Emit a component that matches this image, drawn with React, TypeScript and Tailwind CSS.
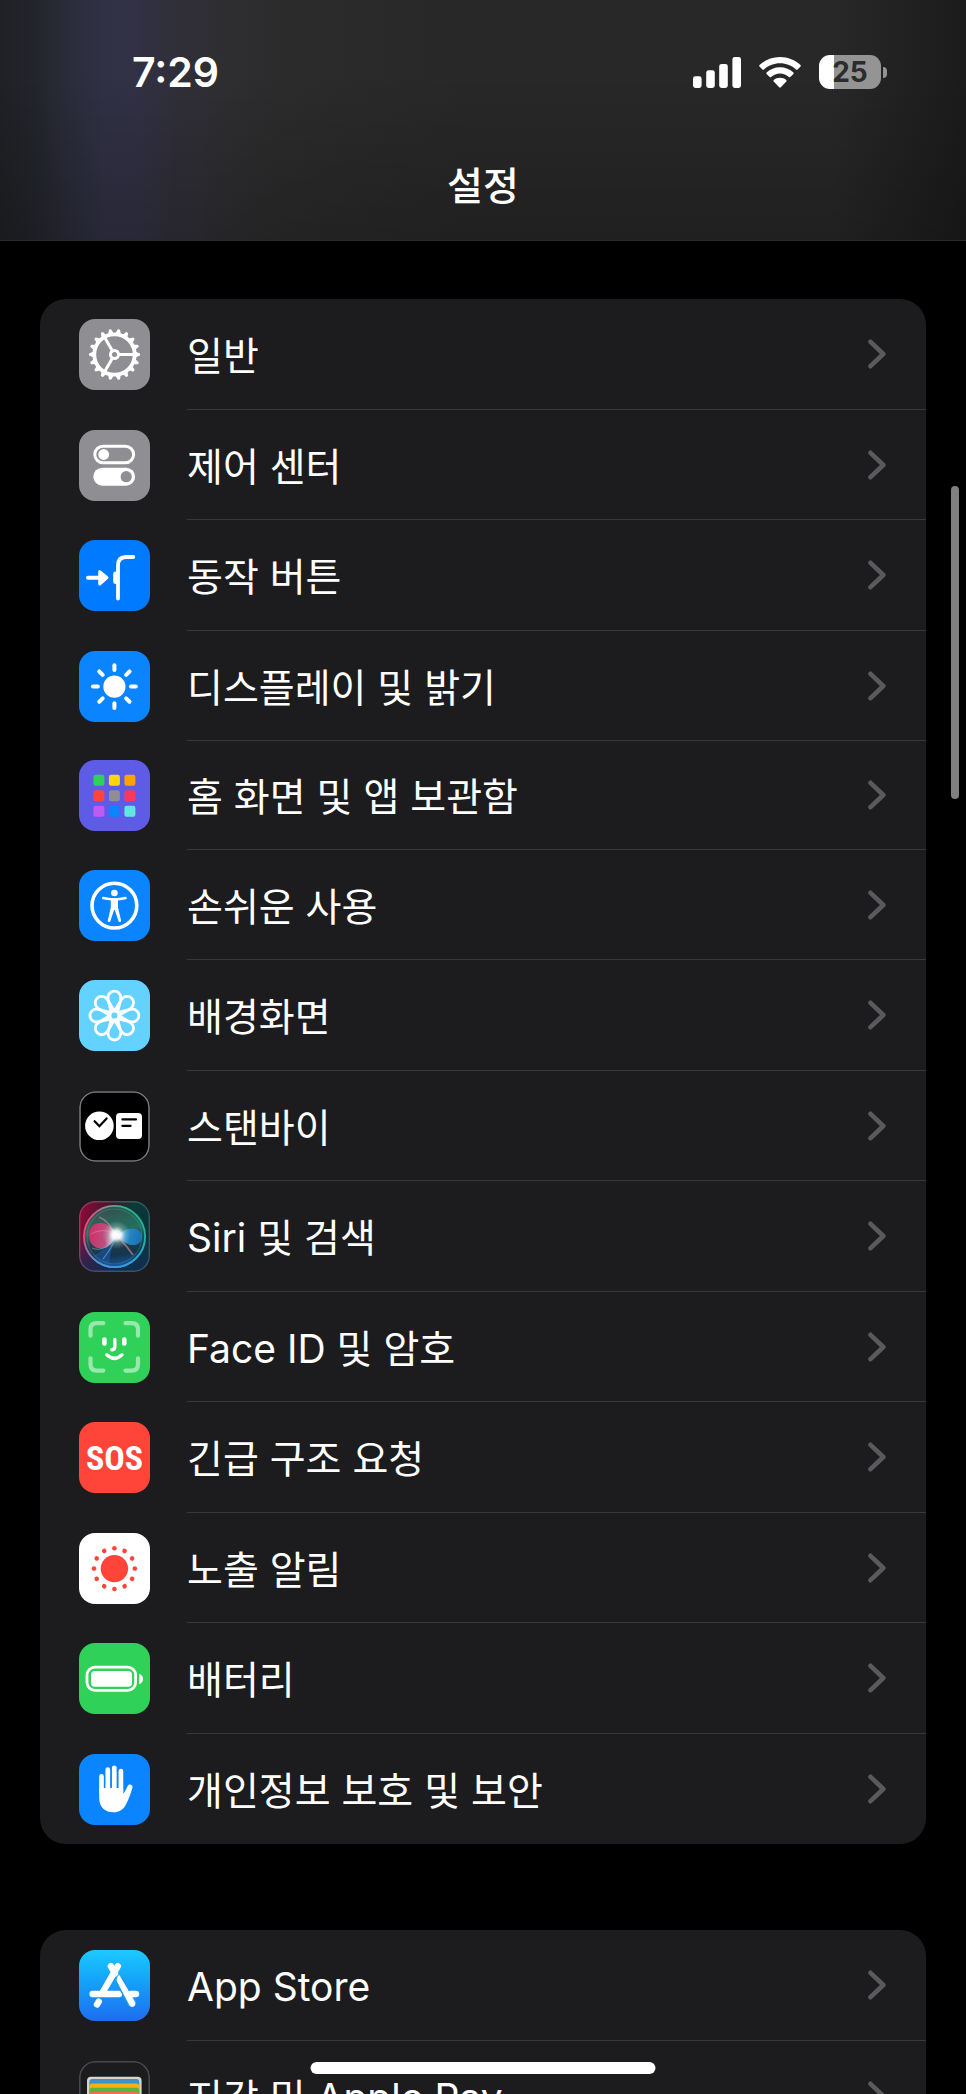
import type { ReactNode } from "react";

const FONT = "font-['Inter','Noto_Sans_CJK_KR',sans-serif]";

type Item = {
  label: string;
  tile: string;
  icon: ReactNode;
  compact?: boolean;
};

function Glyph({ children }: { children: ReactNode }) {
  return (
    <svg viewBox="0 0 71 71" className="block size-full" fill="none" aria-hidden="true">
      {children}
    </svg>
  );
}

function steps(count: number) {
  return Array.from({ length: count }, (_, i) => (360 / count) * i);
}

function GearIcon() {
  return (
    <Glyph>
      <g transform="translate(35.5 35.5)" stroke="#fff" strokeLinecap="round">
        <circle r="20.2" strokeWidth="3.8" />
        <circle r="4" strokeWidth="3" />
        {steps(18).map((a) => (
          <path key={a} d="M21.5 -1.6L24.6 -0.5V0.5L21.5 1.6Z" fill="#fff" strokeWidth="1.8" strokeLinejoin="round" transform={`rotate(${a})`} />
        ))}
        {steps(3).map((a) => (
          <path key={a} d="M5.5 0H19" strokeWidth="3" transform={`rotate(${a})`} />
        ))}
      </g>
    </Glyph>
  );
}

function TogglesIcon() {
  return (
    <Glyph>
      <rect x="15.8" y="16.2" width="38.8" height="16.6" rx="8.3" stroke="#fff" strokeWidth="3" />
      <circle cx="24.7" cy="24.5" r="5.4" fill="#fff" />
      <rect x="14.3" y="37.7" width="41.8" height="18" rx="9" fill="#fff" />
      <circle cx="47.2" cy="46.7" r="5.6" fill="#8e8e93" />
    </Glyph>
  );
}

function ActionIcon() {
  return (
    <Glyph>
      <path d="M9 37.7H22" stroke="#fff" strokeWidth="4" strokeLinecap="round" />
      <path d="M20.7 31.6L28 37.7L20.7 44Z" fill="#fff" stroke="#fff" strokeWidth="3" strokeLinejoin="round" />
      <path d="M54.3 17H47C41.5 17 39 20.5 39 25.5V58.5" stroke="#fff" strokeWidth="3.8" strokeLinecap="round" />
      <rect x="34.2" y="31.5" width="6" height="12.6" rx="2.4" fill="#fff" />
    </Glyph>
  );
}

function SunIcon() {
  return (
    <Glyph>
      <g transform="translate(35.4 35.6)">
        <circle r="11.1" fill="#fff" />
        {steps(8).map((a) => (
          <path key={a} d="M0 -16.6V-21.4" stroke="#fff" strokeWidth="4" strokeLinecap="round" transform={`rotate(${a})`} />
        ))}
      </g>
    </Glyph>
  );
}

const APP_COLORS = ["#30d158", "#ffd60a", "#ff9f0a", "#ff453a", "#8e8e93", "#ff375f", "#bf5af2", "#0a84ff", "#63e6e2"];

function HomeGridIcon() {
  return (
    <Glyph>
      {APP_COLORS.map((color, i) => (
        <rect key={color} x={14.4 + (i % 3) * 15.5} y={14.7 + Math.floor(i / 3) * 15.5} width="11" height="11" rx="2.2" fill={color} />
      ))}
    </Glyph>
  );
}

function AccessibilityIcon() {
  return (
    <Glyph>
      <circle cx="35.4" cy="35.6" r="22.4" stroke="#fff" strokeWidth="3.6" />
      <circle cx="35.4" cy="23" r="3.3" fill="#fff" />
      <path d="M24.2 28C28 29 31 29.4 35.4 29.4S42.8 29 46.6 28" stroke="#fff" strokeWidth="2.4" strokeLinecap="round" />
      <path d="M31.8 28.6H39V37.5L42 50.2A1.2 1.2 0 0 1 39.4 51L35.8 40H35L31.4 51A1.2 1.2 0 0 1 28.8 50.2L31.8 37.5Z" fill="#fff" />
    </Glyph>
  );
}

function FlowerIcon() {
  return (
    <Glyph>
      <g transform="translate(35.4 35.6)" stroke="#fff" strokeWidth="2.8">
        {steps(8).map((a) => (
          <path key={a} d="M-3.4 -3.4C-3.6 -8 -6.4 -13 -6.4 -18A6.4 6.4 0 0 1 6.4 -18C6.4 -13 3.6 -8 3.4 -3.4" transform={`rotate(${a})`} />
        ))}
        <circle r="4.4" />
      </g>
    </Glyph>
  );
}

function StandByIcon() {
  return (
    <Glyph>
      <rect x="1" y="1" width="69" height="69" rx="15.5" stroke="#77777a" strokeWidth="1.6" />
      <circle cx="20.4" cy="34.8" r="14.3" fill="#fff" />
      <path d="M15.6 30.2L20.4 35.2L27.6 27.4" stroke="#000" strokeWidth="2.2" strokeLinecap="round" />
      <rect x="37" y="22" width="26" height="26" rx="4" fill="#fff" />
      <path d="M43.4 28.4H57M43.4 34.8H51.6" stroke="#000" strokeWidth="2.2" strokeLinecap="round" />
    </Glyph>
  );
}

function SiriIcon() {
  return (
    <Glyph>
      <defs>
        <linearGradient id="siriBase" x1="0" y1="0.3" x2="1" y2="0.5">
          <stop offset="0" stopColor="#8a0a35" />
          <stop offset="0.4" stopColor="#3a1a30" />
          <stop offset="0.7" stopColor="#0b3a38" />
          <stop offset="1" stopColor="#0a3338" />
        </linearGradient>
        <linearGradient id="siriLow" x1="0" y1="0" x2="0" y2="1">
          <stop offset="0.5" stopColor="#14386b" stopOpacity="0" />
          <stop offset="1" stopColor="#102a57" stopOpacity="0.8" />
        </linearGradient>
        <linearGradient id="siriOrb" x1="0.4" y1="0" x2="0.55" y2="1">
          <stop offset="0" stopColor="#2f6157" />
          <stop offset="0.4" stopColor="#2c7a6a" />
          <stop offset="0.6" stopColor="#1d4556" />
          <stop offset="0.8" stopColor="#17344c" />
          <stop offset="1" stopColor="#1a5fb4" />
        </linearGradient>
        <linearGradient id="siriRim" x1="0" y1="0.5" x2="1" y2="0.5">
          <stop offset="0" stopColor="#f0447a" />
          <stop offset="0.4" stopColor="#8d8f96" />
          <stop offset="0.7" stopColor="#2dbb86" />
          <stop offset="1" stopColor="#20b6a4" />
        </linearGradient>
        <linearGradient id="siriRimLow" x1="0" y1="0" x2="0" y2="1">
          <stop offset="0.5" stopColor="#2f9af0" stopOpacity="0" />
          <stop offset="1" stopColor="#2f9af0" />
        </linearGradient>
        <linearGradient id="siriPink" x1="0" y1="0" x2="1" y2="0.2">
          <stop offset="0" stopColor="#e0255f" />
          <stop offset="0.7" stopColor="#cb5186" />
          <stop offset="1" stopColor="#f3d9ea" />
        </linearGradient>
        <linearGradient id="siriBlue" x1="0" y1="0" x2="1" y2="0">
          <stop offset="0" stopColor="#c8f4ff" />
          <stop offset="0.35" stopColor="#2e93d6" />
          <stop offset="1" stopColor="#1878c8" />
        </linearGradient>
        <radialGradient id="siriGlow">
          <stop offset="0" stopColor="#fff" />
          <stop offset="0.3" stopColor="#fff" stopOpacity="0.9" />
          <stop offset="0.6" stopColor="#cdf5ee" stopOpacity="0.3" />
          <stop offset="1" stopColor="#cdf5ee" stopOpacity="0" />
        </radialGradient>
      </defs>
      <rect width="71" height="71" fill="url(#siriBase)" />
      <rect width="71" height="71" fill="url(#siriLow)" />
      <circle cx="35.5" cy="35.5" r="30.5" fill="url(#siriOrb)" fillOpacity="0.8" />
      <path d="M37 35C30 44 22 51 14 55A30 30 0 0 0 30 65C31 54 33 44 37 35Z" fill="#1767b8" fillOpacity="0.45" />
      <path d="M38 34C34 26 27 21.500 20.500 22C13.500 22.500 9.500 28 10 35C10.500 43 16 48 23 47.500C30 47 34 41 38 34Z" fill="url(#siriPink)" fillOpacity="0.9" />
      <path d="M38 34C31 29 20 28 12 33" stroke="#f58bb0" strokeOpacity="0.5" />
      <path d="M38 34C31 45 22 51 13 47" stroke="#6fb7c4" strokeOpacity="0.6" />
      <path d="M38 35C42 31 47 27.5 53 27.5C59 27.5 63 31 63 36C63 41 59 44.5 53 44C47 43.5 42 39 38 35Z" fill="url(#siriBlue)" fillOpacity="0.85" />
      <path d="M39 36C45 42 50 48 54 54" stroke="#d98c9c" strokeOpacity="0.6" strokeWidth="1.8" />
      <path d="M37 35C34 45 29 52 24 58" stroke="#58a9ee" strokeOpacity="0.6" strokeWidth="1.2" />
      <path d="M37 35C33 26 28 19 20 16" stroke="#d6a2a8" strokeOpacity="0.5" strokeWidth="1.4" />
      <circle cx="35.5" cy="35.5" r="27.5" stroke="#4fc39c" strokeOpacity="0.25" strokeWidth="1.2" />
      <circle cx="35.5" cy="35.5" r="30.6" stroke="url(#siriRim)" strokeWidth="1.8" />
      <circle cx="35.5" cy="35.5" r="30.6" stroke="url(#siriRimLow)" strokeWidth="1.8" />
      <circle cx="37.5" cy="33.8" r="14" fill="url(#siriGlow)" />
      <rect x="0.7" y="0.7" width="69.6" height="69.6" rx="15.5" stroke="#fff" strokeOpacity="0.18" strokeWidth="1.4" />
    </Glyph>
  );
}

function FaceIdIcon() {
  return (
    <Glyph>
      <path
        d="M11.5 23.7V17.5Q11.5 11.2 18 11.2H24.3M46.5 11.2H52.5Q59 11.2 59 17.5V23.7M59 46.3V52.3Q59 58.6 52.5 58.6H46.5M24.3 58.6H18Q11.5 58.6 11.5 52.3V46.3"
        stroke="#fff" strokeOpacity="0.5" strokeWidth="4.2" strokeLinecap="round"
      />
      <path d="M25.4 27.6V31.4M45.3 27.6V31.4" stroke="#fff" strokeWidth="4.6" strokeLinecap="round" />
      <path d="M35.8 27.4V34.8Q35.8 37.8 32.8 37.8" stroke="#fff" strokeWidth="3.4" strokeLinecap="round" />
      <path d="M27.8 42.8Q35.4 50 43 42.8" stroke="#fff" strokeWidth="3.4" strokeLinecap="round" />
    </Glyph>
  );
}

function SosIcon() {
  return (
    <span className="flex size-full items-center justify-center font-['Roboto_Condensed','Open_Sans_Condensed','Liberation_Sans_Narrow','Roboto',sans-serif] text-[34px] leading-none font-bold text-white">
      SOS
    </span>
  );
}

function ExposureIcon() {
  return (
    <Glyph>
      <g transform="translate(35.4 35.6)" fill="#ff453a">
        <circle r="13.7" />
        {steps(12).map((a) => (
          <circle key={a} cy="-20.4" r="2.3" transform={`rotate(${a})`} />
        ))}
      </g>
    </Glyph>
  );
}

function BatteryIcon() {
  return (
    <Glyph>
      <rect x="8" y="24.2" width="48.6" height="23.2" rx="8" stroke="#fff" strokeWidth="2.8" />
      <rect x="12" y="28" width="41" height="15.8" rx="3.8" fill="#fff" />
      <path d="M60.2 30.8C62.8 31.8 64 33.6 64 36S62.8 40.2 60.2 41.2Z" fill="#fff" />
    </Glyph>
  );
}

function HandIcon() {
  return (
    <Glyph>
      <path d="M22.5 22.4V38M28.8 15.6V36M35.3 13.8V36M41.9 17.2V38" stroke="#fff" strokeWidth="4.7" strokeLinecap="round" />
      <path d="M20.2 34H44.2V39.6C45.8 38.6 47.4 34.6 48.8 31.8C50 29.6 54 30.4 53.5 33.2C52.6 37.2 50 44.6 47 50.4C44.2 55.6 40.2 58.2 34.6 58.2C26.4 58.2 20.2 53.2 20.2 44.4Z" fill="#fff" />
    </Glyph>
  );
}

function AppStoreIcon() {
  return (
    <Glyph>
      <g stroke="#fff" strokeWidth="6.4" strokeLinecap="round">
        <path d="M13.6 44H40" />
        <path d="M31.8 16.2L36 23.4" />
        <path d="M38.8 16.2L23.6 42.4" />
        <path d="M19.8 51.6L18 54.4" />
      </g>
      <path d="M40.2 29.5L53.4 54" stroke="#1e96f7" strokeWidth="9" />
      <path d="M52 44H57" stroke="#fff" strokeWidth="6.4" strokeLinecap="round" />
      <path d="M37.7 31C37.4 28.4 38.4 26.2 40.4 25L56 51.8C58 55.8 52.8 59 50.4 55.2Z" fill="#fff" />
    </Glyph>
  );
}

function WalletIcon() {
  return (
    <Glyph>
      <rect x="0.8" y="0.8" width="69.4" height="69.4" rx="15.5" stroke="#48484a" strokeWidth="1.6" />
      <rect x="8" y="15.7" width="54.6" height="41" rx="4" fill="#d8d4c6" />
      <rect x="10.3" y="18" width="50" height="20" rx="3" fill="#3d94c4" />
      <rect x="10.3" y="22.6" width="50" height="20" rx="3" fill="#f9ae12" />
      <rect x="10.3" y="26.8" width="50" height="20" rx="3" fill="#58b340" />
      <rect x="10.3" y="31" width="50" height="20" rx="3" fill="#ee6c5c" />
    </Glyph>
  );
}

const systemItems: Item[] = [
  { label: "일반", tile: "bg-[#8e8e93]", icon: <GearIcon /> },
  { label: "제어 센터", tile: "bg-[#8e8e93]", icon: <TogglesIcon /> },
  { label: "동작 버튼", tile: "bg-[#007aff]", icon: <ActionIcon /> },
  { label: "디스플레이 및 밝기", tile: "bg-[#0a84ff]", icon: <SunIcon /> },
  { label: "홈 화면 및 앱 보관함", tile: "bg-[#5e5ce6]", icon: <HomeGridIcon />, compact: true },
  { label: "손쉬운 사용", tile: "bg-[#0a84ff]", icon: <AccessibilityIcon /> },
  { label: "배경화면", tile: "bg-[#64d2ff]", icon: <FlowerIcon /> },
  { label: "스탠바이", tile: "bg-black", icon: <StandByIcon /> },
  { label: "Siri 및 검색", tile: "bg-[#123]", icon: <SiriIcon /> },
  { label: "Face ID 및 암호", tile: "bg-[#30d158]", icon: <FaceIdIcon /> },
  { label: "긴급 구조 요청", tile: "bg-[#ff453a]", icon: <SosIcon /> },
  { label: "노출 알림", tile: "bg-white", icon: <ExposureIcon /> },
  { label: "배터리", tile: "bg-[#30d158]", icon: <BatteryIcon /> },
  { label: "개인정보 보호 및 보안", tile: "bg-[#0a84ff]", icon: <HandIcon /> },
];

const storeItems: Item[] = [
  { label: "App Store", tile: "bg-linear-to-b from-[#1dcaff] to-[#1f6cf0]", icon: <AppStoreIcon /> },
  { label: "지갑 및 Apple Pay", tile: "bg-[#1c1c1e]", icon: <WalletIcon /> },
];

function Row({ item }: { item: Item }) {
  return (
    <li className={`group flex ${item.compact ? "h-[109px]" : "odd:h-[111px] even:h-[110px]"}`}>
      <a href="#" className="flex flex-1 items-center gap-[37px] pl-[39px]">
        <span className={`size-[71px] shrink-0 overflow-hidden rounded-[16px] ${item.tile}`}>{item.icon}</span>
        <span className="flex flex-1 items-center justify-between self-stretch border-b border-[#38383a] pr-10 group-last:border-b-0">
          <span className="pt-1 text-[39px] leading-[56px] whitespace-nowrap">{item.label}</span>
          <svg viewBox="0 0 18 30" className="h-[30px] w-[18px]" fill="none" aria-hidden="true">
            <path d="M2.5 2.8L15.3 15L2.5 27.2" stroke="#5a5a5e" strokeWidth="4.6" strokeLinecap="round" strokeLinejoin="round" />
          </svg>
        </span>
      </a>
    </li>
  );
}

function Group({ items }: { items: Item[] }) {
  return (
    <ul className="shrink-0 overflow-hidden rounded-[26px] bg-[#1c1c1e]">
      {items.map((item) => (
        <Row key={item.label} item={item} />
      ))}
    </ul>
  );
}

function StatusBar() {
  return (
    <div className="flex h-[144px] items-center justify-between pr-[79px] pl-[132px]">
      <time className="text-[41px] leading-[48px] font-semibold">7:29</time>
      <div className="flex items-center gap-[18px]">
        <svg viewBox="0 0 48 31" className="h-[31px] w-[48px]" fill="#fff" aria-hidden="true">
          <rect x="0" y="19.3" width="8.6" height="11.7" rx="2.4" />
          <rect x="13.2" y="13.3" width="8.6" height="17.7" rx="2.4" />
          <rect x="26.2" y="7" width="8.6" height="24" rx="2.4" />
          <rect x="39.4" y="0" width="8.6" height="31" rx="2.4" />
        </svg>
        <svg viewBox="0 0 42 31" className="h-[31px] w-[42px]" fill="#fff" aria-hidden="true">
          <path d="M21 0C13 0 5.8 3 0.5 8Q-0.2 8.8 0.5 9.5L3.4 12.5Q4.2 13.1 5 12.5C9.2 8.6 14.8 6.3 21 6.3S32.8 8.6 37 12.5Q37.8 13.1 38.6 12.5L41.5 9.5Q42.2 8.8 41.5 8C36.2 3 29 0 21 0Z" />
          <path d="M21 10.3C15.8 10.3 11.1 12.3 7.6 15.5Q6.9 16.2 7.6 17L10.7 20Q11.4 20.6 12.2 20C14.6 17.9 17.6 16.6 21 16.6S27.4 17.9 29.8 20Q30.6 20.6 31.3 20L34.4 17Q35.1 16.2 34.4 15.5C30.9 12.3 26.2 10.3 21 10.3Z" />
          <path d="M21 20.7C18.6 20.7 16.4 21.6 14.7 23Q14.1 23.7 14.7 24.4L20.2 30.3Q21 31 21.8 30.3L27.3 24.4Q27.9 23.7 27.3 23C25.6 21.6 23.4 20.7 21 20.7Z" />
        </svg>
        <div className="flex items-center gap-0.5">
          <span className="flex h-[34px] w-[62px] items-center justify-center rounded-[11px] bg-linear-to-r from-white from-25% to-[#949494] to-25% text-[28px] leading-none font-bold text-[#2c2c2c]">
            25
          </span>
          <span className="h-[11px] w-1 rounded-r-full bg-[#949494]" />
        </div>
      </div>
    </div>
  );
}

export default function App() {
  return (
    <div className={`relative flex h-screen flex-col overflow-hidden bg-black text-white ${FONT}`} lang="ko">
      {/* Navigation bar */}
      <header className="shrink-0 border-b border-[#2a2a2b] bg-[linear-gradient(to_bottom,transparent_30%,rgba(0,0,0,0.2)),linear-gradient(to_right,#1f2124_0%,#22242a_3%,#2b2c3a_7%,#313145_11%,#323145_14%,#302f3a_18%,#2f2f33_22%,#2c2c2d_28%,#2a2a2a_36%,#282828_48%,#282828_86%,#1b1b1b_100%)]">
        <StatusBar />
        <h1 className="h-24 pt-[14px] text-center text-[39px] leading-[56px] font-medium">설정</h1>
      </header>

      {/* Settings */}
      <main className="flex flex-1 flex-col gap-[86px] overflow-hidden px-10 pt-[58px]">
        <Group items={systemItems} />
        <Group items={storeItems} />
      </main>

      {/* Scroll thumb and home indicator */}
      <div className="absolute top-[486px] right-[7px] h-[313px] w-2 rounded-full bg-[#808080]" />
      <div className="absolute bottom-5 left-1/2 h-3 w-[345px] -translate-x-1/2 rounded-full bg-white" />
    </div>
  );
}
